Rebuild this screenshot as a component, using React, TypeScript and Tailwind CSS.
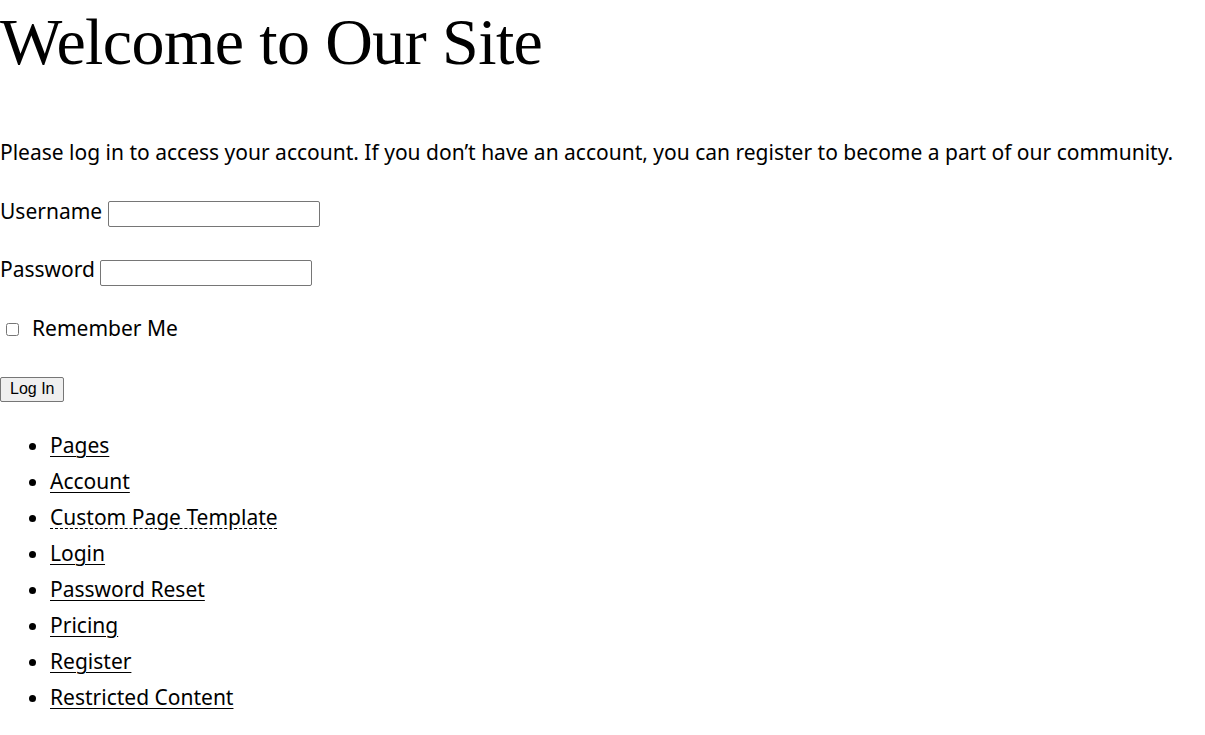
const links = [
  { label: 'Pages' },
  { label: 'Account' },
  { label: 'Custom Page Template', dotted: true },
  { label: 'Login' },
  { label: 'Password Reset' },
  { label: 'Pricing' },
  { label: 'Register' },
  { label: 'Restricted Content' },
];

export default function App() {
  return (
    <div className="min-h-screen bg-white text-black font-['Noto_Sans',sans-serif] text-[21px]">
      {/* Heading */}
      <h1 className="m-0 text-[66px] leading-[82px] font-light font-['Liberation_Serif',serif] tracking-[-0.6px] pt-[1px]">
        Welcome to Our Site
      </h1>

      <p className="mt-[53px] leading-[32px]">
        Please log in to access your account. If you don’t have an account, you can register to become a part of our community.
      </p>

      {/* Login form */}
      <form className="mt-[28px] flex flex-col" onSubmit={(e) => e.preventDefault()}>
        <div className="flex items-center h-[32px]">
          <label htmlFor="user">Username</label>
          <input
            id="user"
            type="text"
            className="ml-[6px] mt-[4px] w-[212px] h-[26px] border border-[#767676] rounded-[2px] bg-white"
          />
        </div>
        <div className="mt-[26px] flex items-center h-[32px]">
          <label htmlFor="pass">Password</label>
          <input
            id="pass"
            type="password"
            className="ml-[5px] mt-[6px] w-[212px] h-[26px] border border-[#767676] rounded-[2px] bg-white"
          />
        </div>
        <div className="mt-[27px] flex items-center h-[32px]">
          <input id="remember" type="checkbox" className="ml-[6px] mr-[13px] w-[13px] h-[13px]" />
          <label htmlFor="remember">Remember Me</label>
        </div>
        <div className="mt-[26px]">
          <button
            type="submit"
            className="h-[25px] px-[9px] text-[16px] font-['Liberation_Sans',sans-serif] bg-[#efefef] border border-[#767676] rounded-[2px] leading-none"
          >
            Log In
          </button>
        </div>
      </form>

      {/* Page links */}
      <ul className="mt-[24px] pl-[50px] list-disc leading-[36px]">
        {links.map((l) => (
          <li key={l.label}>
            <a
              href="#"
              className={
                l.dotted
                  ? 'text-black underline decoration-dashed decoration-1 underline-offset-[3px]'
                  : 'text-black underline decoration-1 underline-offset-[3px]'
              }
            >
              {l.label}
            </a>
          </li>
        ))}
      </ul>
    </div>
  );
}
